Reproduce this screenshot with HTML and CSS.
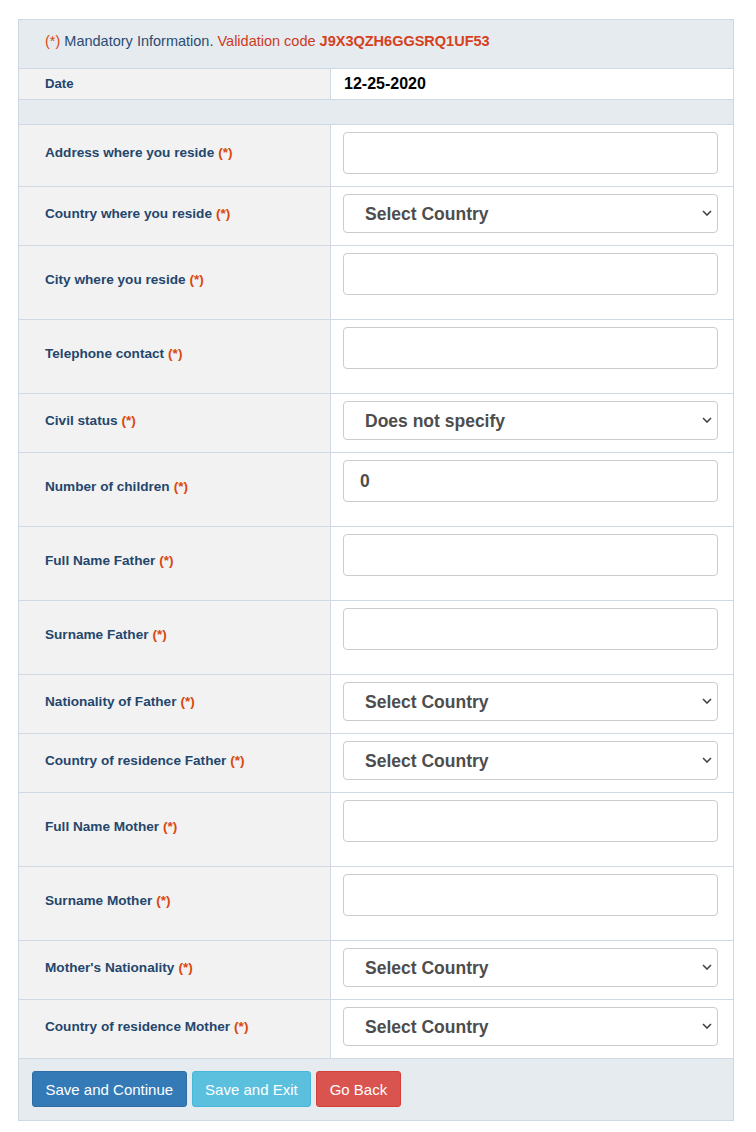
FILE: index.html
```html
<!DOCTYPE html>
<html lang="en">
<head>
  <meta charset="UTF-8">
  <meta name="viewport" content="width=device-width, initial-scale=1.0">
  <title>Personal Information</title>
  <link rel="stylesheet" href="styles.css">
</head>
<body>

  <form class="info-form">

    <!-- Mandatory notice -->
    <div class="form-notice">
      <span class="req">(*)</span> Mandatory Information.
      <span class="code-label">Validation code</span> <strong class="code">J9X3QZH6GGSRQ1UF53</strong>
    </div>

    <div class="form-row date-row">
      <div class="label-cell">Date</div>
      <div class="value-cell">12-25-2020</div>
    </div>

    <div class="form-spacer"></div>

    <div class="form-row">
      <label class="label-cell">Address where you reside <span class="req">(*)</span></label>
      <div class="field-cell"><input type="text" class="form-input"></div>
    </div>

    <div class="form-row">
      <label class="label-cell">Country where you reside <span class="req">(*)</span></label>
      <div class="field-cell">
        <div class="select-wrap">
          <select class="form-select"><option>Select Country</option></select>
          <svg class="chevron" viewBox="0 0 10 6"><path d="M1 1l4 4 4-4"/></svg>
        </div>
      </div>
    </div>

    <div class="form-row">
      <label class="label-cell">City where you reside <span class="req">(*)</span></label>
      <div class="field-cell field-cell--hint"><input type="text" class="form-input"></div>
    </div>

    <div class="form-row">
      <label class="label-cell">Telephone contact <span class="req">(*)</span></label>
      <div class="field-cell field-cell--hint"><input type="text" class="form-input"></div>
    </div>

    <div class="form-row">
      <label class="label-cell">Civil status <span class="req">(*)</span></label>
      <div class="field-cell">
        <div class="select-wrap">
          <select class="form-select"><option>Does not specify</option></select>
          <svg class="chevron" viewBox="0 0 10 6"><path d="M1 1l4 4 4-4"/></svg>
        </div>
      </div>
    </div>

    <div class="form-row">
      <label class="label-cell">Number of children <span class="req">(*)</span></label>
      <div class="field-cell field-cell--hint"><input type="text" class="form-input" value="0"></div>
    </div>

    <div class="form-row">
      <label class="label-cell">Full Name Father <span class="req">(*)</span></label>
      <div class="field-cell field-cell--hint"><input type="text" class="form-input"></div>
    </div>

    <div class="form-row">
      <label class="label-cell">Surname Father <span class="req">(*)</span></label>
      <div class="field-cell field-cell--hint"><input type="text" class="form-input"></div>
    </div>

    <div class="form-row">
      <label class="label-cell">Nationality of Father <span class="req">(*)</span></label>
      <div class="field-cell">
        <div class="select-wrap">
          <select class="form-select"><option>Select Country</option></select>
          <svg class="chevron" viewBox="0 0 10 6"><path d="M1 1l4 4 4-4"/></svg>
        </div>
      </div>
    </div>

    <div class="form-row">
      <label class="label-cell">Country of residence Father <span class="req">(*)</span></label>
      <div class="field-cell">
        <div class="select-wrap">
          <select class="form-select"><option>Select Country</option></select>
          <svg class="chevron" viewBox="0 0 10 6"><path d="M1 1l4 4 4-4"/></svg>
        </div>
      </div>
    </div>

    <div class="form-row">
      <label class="label-cell">Full Name Mother <span class="req">(*)</span></label>
      <div class="field-cell field-cell--hint"><input type="text" class="form-input"></div>
    </div>

    <div class="form-row">
      <label class="label-cell">Surname Mother <span class="req">(*)</span></label>
      <div class="field-cell field-cell--hint"><input type="text" class="form-input"></div>
    </div>

    <div class="form-row">
      <label class="label-cell">Mother's Nationality <span class="req">(*)</span></label>
      <div class="field-cell">
        <div class="select-wrap">
          <select class="form-select"><option>Select Country</option></select>
          <svg class="chevron" viewBox="0 0 10 6"><path d="M1 1l4 4 4-4"/></svg>
        </div>
      </div>
    </div>

    <div class="form-row">
      <label class="label-cell">Country of residence Mother <span class="req">(*)</span></label>
      <div class="field-cell">
        <div class="select-wrap">
          <select class="form-select"><option>Select Country</option></select>
          <svg class="chevron" viewBox="0 0 10 6"><path d="M1 1l4 4 4-4"/></svg>
        </div>
      </div>
    </div>

    <!-- Actions -->
    <div class="form-actions">
      <button type="submit" class="btn btn-primary">Save and Continue</button>
      <button type="button" class="btn btn-info">Save and Exit</button>
      <button type="button" class="btn btn-danger">Go Back</button>
    </div>

  </form>

</body>
</html>
```

FILE: styles.css
```css
/* Basic Styles */
* {
  margin: 0;
  padding: 0;
  box-sizing: border-box;
}

body {
  font-family: 'Liberation Sans', Arial, sans-serif;
  background-color: #fff;
  color: #333;
  padding: 19px 0 0 18px;
}

.info-form {
  width: 716px;
  border: 1px solid #cfd9e3;
}

.req {
  color: #d9480f;
}

/* Notice bar */
.form-notice {
  height: 48px;
  padding: 13px 0 0 26px;
  background-color: #e6ebf0;
  font-size: 14.5px;
  color: #2b4c72;
}

.code-label {
  color: #cc3a1e;
}

.code {
  color: #d6401a;
}

/* Rows */
.form-row {
  display: grid;
  grid-template-columns: 312px 1fr;
  border-top: 1px solid #cfd9e3;
}

.label-cell {
  display: flex;
  align-items: center;
  gap: 4px;
  padding: 0 0 6px 26px;
  background-color: #f2f2f2;
  border-right: 1px solid #cfd9e3;
  font-size: 13.6px;
  font-weight: bold;
  color: #24466d;
}

.date-row {
  height: 31px;
}

.date-row .label-cell {
  font-size: 13.2px;
  padding-bottom: 2px;
}

.value-cell {
  display: flex;
  align-items: center;
  padding-left: 13px;
  font-size: 16px;
  font-weight: bold;
  color: #000;
}

.form-spacer {
  height: 25px;
  background-color: #e6ebf0;
  border-top: 1px solid #cfd9e3;
}

.field-cell {
  padding: 7px 15px 12px 12px;
}

.field-cell--hint {
  padding-bottom: 24px;
}

.form-input,
.form-select {
  display: block;
  width: 100%;
  border: 1px solid #ccc;
  border-radius: 4px;
  background-color: #fff;
  font-family: 'Liberation Sans', Arial, sans-serif;
  font-size: 17.5px;
  font-weight: bold;
  color: #4d4d4d;
}

.form-input {
  height: 42px;
  padding: 0 16px;
}

.select-wrap {
  position: relative;
}

.form-select {
  height: 39px;
  padding: 0 30px 0 21px;
  appearance: none;
  -webkit-appearance: none;
}

/* dropdown arrow drawn over the select */
.chevron {
  position: absolute;
  right: 6px;
  top: 16px;
  width: 10px;
  height: 6px;
  fill: none;
  stroke: #444;
  stroke-width: 1.6;
  pointer-events: none;
}

/* Buttons */
.form-actions {
  display: flex;
  gap: 5px;
  padding: 12px 13px 13px;
  background-color: #e6ebf0;
  border-top: 1px solid #cfd9e3;
}

.btn {
  height: 36px;
  padding: 0 12.5px;
  border: 1px solid transparent;
  border-radius: 3px;
  font-family: 'Liberation Sans', Arial, sans-serif;
  font-size: 15px;
  color: #fff;
  cursor: pointer;
}

.btn-primary {
  background-color: #337ab7;
  border-color: #2e6da4;
}

.btn-info {
  background-color: #5bc0de;
  border-color: #46b8da;
}

.btn-danger {
  background-color: #d9534f;
  border-color: #d43f3a;
}
```
